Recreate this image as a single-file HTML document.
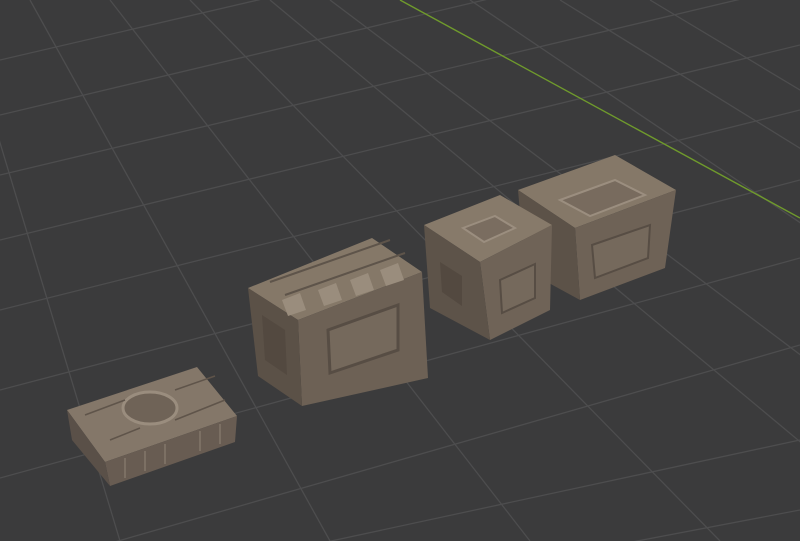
<!DOCTYPE html>
<html><head><style>html,body{margin:0;padding:0;background:#3c3c3c;overflow:hidden;width:800px;height:541px}svg{display:block}</style></head>
<body>
<svg width="800" height="541" viewBox="0 0 800 541" xmlns="http://www.w3.org/2000/svg">
<rect width="800" height="541" fill="#3b3b3c"/>
<g stroke="#4d4d4e" stroke-width="1.3" fill="none">
<line x1="0" y1="60" x2="430" y2="-40"/>
<line x1="0" y1="115" x2="800" y2="-75"/>
<line x1="0" y1="175" x2="800" y2="-15"/>
<line x1="0" y1="240" x2="800" y2="45"/>
<line x1="0" y1="310" x2="800" y2="110"/>
<line x1="0" y1="390" x2="800" y2="180"/>
<line x1="0" y1="478" x2="800" y2="258"/>
<line x1="0" y1="575" x2="800" y2="345"/>
<line x1="150" y1="580" x2="800" y2="440"/>
<line x1="380" y1="590" x2="800" y2="510"/>
<line x1="-40" y1="10" x2="120" y2="541"/>
<line x1="30" y1="0" x2="330" y2="541"/>
<line x1="110" y1="0" x2="530" y2="541"/>
<line x1="190" y1="0" x2="720" y2="541"/>
<line x1="270" y1="0" x2="870" y2="500"/>
<line x1="330" y1="0" x2="900" y2="430"/>
<line x1="470" y1="0" x2="900" y2="290"/>
<line x1="560" y1="0" x2="900" y2="210"/>
<line x1="650" y1="0" x2="900" y2="150"/>
<line x1="-60" y1="200" x2="-20" y2="541"/>
</g>
<line x1="400" y1="0" x2="800" y2="218" stroke="#6f9a2c" stroke-width="1.4"/>

<!-- flat crate -->
<polygon points="67,410 197,367 237,416 105,462" fill="#847769"/>
<polygon points="105,462 237,416 235,442 110,486" fill="#685c52"/>
<polygon points="67,410 105,462 110,486 72,440" fill="#5a5048"/>
<g stroke="#7c7064" stroke-width="2"><line x1="125" y1="458" x2="125" y2="478"/><line x1="145" y1="451" x2="145" y2="471"/><line x1="165" y1="444" x2="165" y2="464"/><line x1="200" y1="431" x2="200" y2="451"/><line x1="220" y1="424" x2="220" y2="444"/></g>
<ellipse cx="150" cy="408" rx="27" ry="16" fill="#6f6357" stroke="#9a8d7e" stroke-width="3"/>
<g stroke="#5f544a" stroke-width="1.5"><line x1="85" y1="415" x2="125" y2="400"/><line x1="175" y1="390" x2="215" y2="376"/><line x1="110" y1="440" x2="140" y2="428"/><line x1="175" y1="420" x2="225" y2="400"/></g>

<!-- crate 3 (back right) -->
<polygon points="518,190 615,155 676,190 575,228" fill="#857868"/>
<polygon points="575,228 676,190 665,268 580,300" fill="#6e6256"/>
<polygon points="518,190 575,228 580,300 525,270" fill="#5c5248"/>
<polygon points="560,200 615,180 645,195 590,216" fill="#786b5e" stroke="#9b8e7f" stroke-width="2"/>
<polygon points="592,245 650,225 648,258 595,278" fill="#75695c" stroke="#574d44" stroke-width="2"/>

<!-- crate 2 -->
<polygon points="424,225 500,195 552,225 480,262" fill="#877a6a"/>
<polygon points="480,262 552,225 550,310 490,340" fill="#6f6357"/>
<polygon points="424,225 480,262 490,340 430,308" fill="#5d5349"/>
<polygon points="463,228 495,216 515,228 484,242" fill="#7a6d60" stroke="#9b8e7f" stroke-width="2"/>
<polygon points="500,280 535,264 535,298 502,313" fill="#75695c" stroke="#574d44" stroke-width="2"/>
<polygon points="440,262 462,276 462,306 442,292" fill="#534940"/>

<!-- crate 1 big -->
<polygon points="248,288 372,238 422,272 298,320" fill="#857868"/>
<polygon points="298,320 422,272 428,378 302,406" fill="#6d6155"/>
<polygon points="248,288 298,320 302,406 258,376" fill="#5b5147"/>
<g fill="#9a8d7d"><polygon points="282,300 300,293 306,310 288,316"/><polygon points="318,290 336,283 342,300 324,306"/><polygon points="350,280 368,273 374,290 356,296"/><polygon points="380,270 398,263 404,280 386,286"/></g>
<g stroke="#5e544a" stroke-width="2"><line x1="270" y1="282" x2="390" y2="240"/><line x1="285" y1="295" x2="405" y2="253"/></g>
<polygon points="328,330 398,305 398,350 330,373" fill="#75695c" stroke="#574d44" stroke-width="3"/>
<polygon points="262,315 285,330 287,375 265,360" fill="#534940"/>
</svg>
</body></html>
